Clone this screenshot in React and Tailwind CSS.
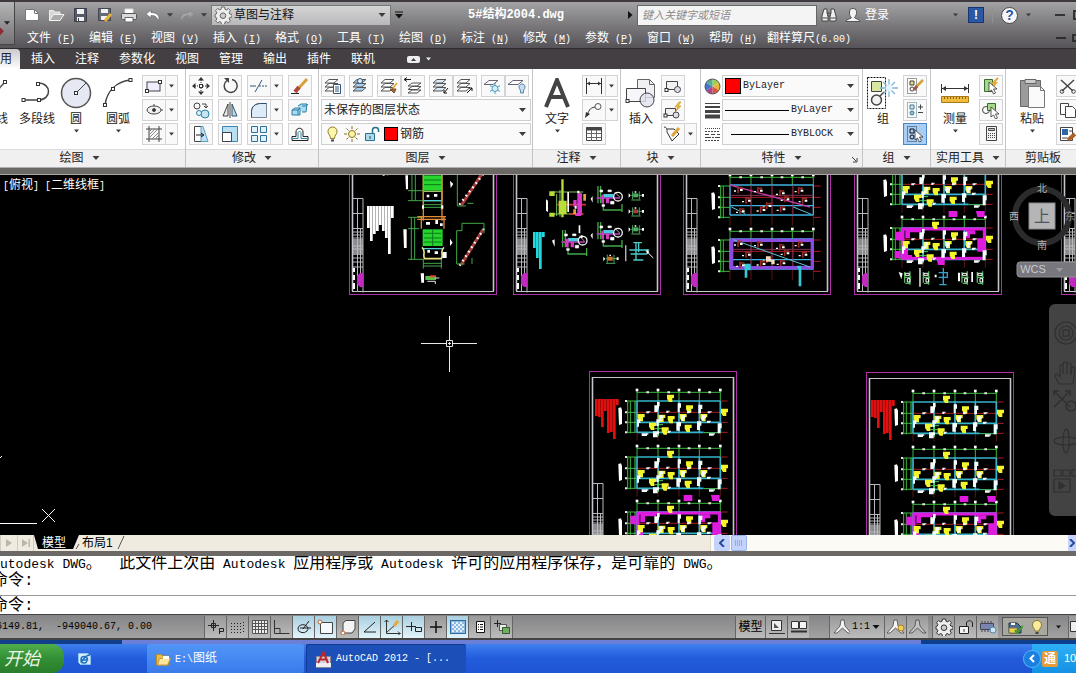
import React, { useState } from 'react';

// ---------- shared bits ----------
const MONO = "font-['Liberation_Mono','Noto_Sans_CJK_SC',monospace]";

const Icon = ({ w = 20, h = 18, children }) => (
  <svg
    width={w}
    height={h}
    viewBox={`0 0 ${w} ${h}`}
    fill="none"
    stroke="#444"
    className="shrink-0"
    aria-hidden="true"
  >
    {children}
  </svg>
);

const Caret = ({ color = '#3c3c3c', w = 7 }) => (
  <svg width={w} height="4" viewBox="0 0 7 4" className="shrink-0" aria-hidden="true">
    <path d="M0 0h7L3.500 4z" fill={color} />
  </svg>
);

// Latin part of a mixed label
const Latin = ({ children }) => <span className={`${MONO} text-[10px]`}>{children}</span>;

const ToolButton = ({ label, active, children }) => (
  <button
    type="button"
    aria-label={label}
    className={`flex h-[22px] w-6 shrink-0 items-center justify-center border ${
      active ? 'border-[#4d86c4] bg-[#a9cdf5]' : 'border-[#d3d3d6] bg-[#f9f9fa]'
    }`}
  >
    {children}
  </button>
);

const SplitButton = ({ label, children }) => (
  <div className="flex">
    <ToolButton label={label}>{children}</ToolButton>
    <button
      type="button"
      aria-label={`${label} ▾`}
      className="flex h-[22px] w-3 items-center justify-center border border-l-0 border-[#d3d3d6] bg-[#f9f9fa]"
    >
      <Caret w={5} />
    </button>
  </div>
);

const BigButton = ({ label, caret, className = '', children }) => (
  <button type="button" className={`flex shrink-0 flex-col items-center ${className}`}>
    <span className="flex h-9 items-center justify-center">{children}</span>
    <span className="h-4 leading-4 whitespace-nowrap">{label}</span>
    {caret && (
      <span className="flex h-2 items-center">
        <Caret w={5} />
      </span>
    )}
  </button>
);

const Panel = ({ title, className = '', footClass = '', corner, noCaret, children }) => (
  <section className={`flex shrink-0 flex-col border-r border-[#c4c4c6] ${className}`}>
    <div className="flex h-20 items-start pt-1.5">{children}</div>
    <div
      className={`relative flex h-[18px] items-center justify-center gap-2 border-t border-[#dcdcde] bg-[#f0f0f1] pb-0.5 ${footClass}`}
    >
      <span className="whitespace-nowrap">{title}</span>
      {!noCaret && <Caret w={8} />}
      {corner && (
        <button type="button" aria-label="特性选项板" className="absolute right-1 bottom-1">
          <Icon w={7} h={7}>
            <path d="M1 1l4 4M6 2v4H2" />
          </Icon>
        </button>
      )}
    </div>
  </section>
);

const Rows = ({ className = '', children }) => (
  <div className={`flex shrink-0 flex-col gap-0.5 ${className}`}>{children}</div>
);

const Combo = ({ label, value, lead, className = '', right }) => (
  <div className={`relative flex h-[22px] items-center border border-[#cfcfd2] bg-[#fafafa] ${className}`}>
    {lead}
    <select
      aria-label={label}
      className={`min-w-0 flex-1 appearance-none bg-transparent outline-none ${right ? 'text-right' : ''}`}
    >
      <option>{value}</option>
    </select>
    <span className="pointer-events-none flex w-4 justify-center">
      <Caret />
    </span>
  </div>
);

// ---------- title bar and menu ----------
const MENUS = [
  ['文件', 'F'], ['编辑', 'E'], ['视图', 'V'], ['插入', 'I'], ['格式', 'O'], ['工具', 'T'],
  ['绘图', 'D'], ['标注', 'N'], ['修改', 'M'], ['参数', 'P'], ['窗口', 'W'], ['帮助', 'H'],
];

const QuickAccess = () => (
  <div className="flex shrink-0 items-center">
    <button type="button" aria-label="新建" className="mr-2">
      <Icon w={16} h={14}>
        <path d="M1.500 1.500h9l4 4v7h-13z" fill="#fff" stroke="#777" />
        <path d="M10.500 1.500v4h4" stroke="#777" />
      </Icon>
    </button>
    <button type="button" aria-label="打开" className="mr-2">
      <Icon w={17} h={14}>
        <path d="M1.500 12.500v-10h4l1.500 1.500h5v3" fill="#d7d7d7" stroke="#eee" />
        <path d="M1.500 12.500l4-6h10.500l-4 6z" fill="#aaa" stroke="#f4f4f4" />
      </Icon>
    </button>
    <button type="button" aria-label="保存" className="mr-2">
      <Icon w={16} h={14}>
        <path d="M1.500.5h12v13h-12z" fill="#55596a" stroke="#3a3d48" />
        <path d="M4 1h7v5H4zM4 9h7v4H4z" fill="#f2f2f2" stroke="none" />
        <path d="M5.500 10v3" />
      </Icon>
    </button>
    <button type="button" aria-label="另存为" className="mr-2">
      <Icon w={16} h={14}>
        <path d="M1.500.5h12v12h-12z" fill="#666a78" stroke="#44464f" />
        <path d="M4 1h7v4H4zM4 8h7v4H4z" fill="#f2f2f2" stroke="none" />
        <path d="M8 13l6-7" stroke="#e3b23a" strokeWidth="3" />
      </Icon>
    </button>
    <button type="button" aria-label="打印" className="mr-2">
      <Icon w={16} h={15}>
        <path d="M4 6V1h8v5" fill="#fff" stroke="#ddd" />
        <rect x=".5" y="5.500" width="15" height="6" rx="1" fill="#d9d9d9" stroke="#555" />
        <path d="M4 9.500h8V14H4z" fill="#fff" stroke="#666" />
      </Icon>
    </button>
    <button type="button" aria-label="放弃" className="mr-1.5">
      <Icon w={16} h={13}>
        <path d="M6 1L1 5l5 4V6.500c4 0 6 1 7 5.500 3-5-1-8.500-7-8.500z" fill="#fff" stroke="#666" strokeWidth=".7" />
      </Icon>
    </button>
    <Caret w={6} />
    <button type="button" aria-label="重做" className="mx-1.5">
      <Icon w={16} h={13}>
        <path d="M10 1l5 4-5 4V6.500c-4 0-6 1-7 5.500-3-5 1-8.500 7-8.500z" fill="#a5a5a5" stroke="#888" strokeWidth=".7" />
      </Icon>
    </button>
    <Caret w={6} />
  </div>
);

const GearShape = ({ stroke = '#666' }) => (
  <Icon w={18} h={18}>
    <path
      d="M7.500 1h3l.5 2.300 1.400.6 2-1.300 2 2-1.300 2 .6 1.400 2.300.5v2.500l-2.300.5-.6 1.400 1.300 2-2 2-2-1.300-1.400.6-.5 2.300h-3L7 16.200l-1.400-.6-2 1.300-2-2 1.300-2-.6-1.400L1 11V8.500L2.300 8l.6-1.400-1.300-2 2-2 2 1.300L7 3.300z"
      fill="#eee"
      stroke={stroke}
      strokeLinejoin="round"
    />
    <circle cx="9" cy="9.700" r="2.800" stroke={stroke} fill="#ccc" />
  </Icon>
);

const TitleBar = () => (
  <header className="flex overflow-hidden border-t-2 border-[#3e3a40] bg-linear-to-b from-[#a3a2a4] to-[#555357] text-white">
    <button
      type="button"
      aria-label="应用程序菜单"
      className="relative h-[43px] w-[15px] shrink-0 border-r border-b border-[#444] bg-linear-to-b from-[#b5b5b6] to-[#757376]"
    >
      <span className="flex justify-center">
        <Caret w={6} color="#222" />
      </span>
      <span className="absolute bottom-2 -left-1 h-2 w-1.5 rotate-45 bg-[#8e2a34]" />
    </button>
    <div className="min-w-0 flex-1">
      <div className="flex h-[26px] items-center">
        <div className="pl-[9px]">
          <QuickAccess />
        </div>
        <div className="ml-1 flex h-[21px] w-[180px] shrink-0 items-center border border-[#777] bg-linear-to-b from-[#d5d5d6] to-[#b9b9bb] pl-0.5 text-[#111]">
          <GearShape />
          <select aria-label="工作空间" className="ml-0.5 min-w-0 flex-1 appearance-none bg-transparent outline-none">
            <option>草图与注释</option>
          </select>
          <span className="mr-1">
            <Caret w={8} />
          </span>
        </div>
        <button type="button" aria-label="自定义快速访问工具栏" className="ml-1">
          <Icon w={9} h={8}>
            <path d="M0 1h8" stroke="#111" />
            <path d="M0 3h8L4 7.500z" fill="#111" stroke="none" />
          </Icon>
        </button>
        <h1 className={`${MONO} min-w-0 flex-1 truncate text-center text-xs font-bold`}>5#结构2004.dwg</h1>
        <Icon w={5} h={8}>
          <path d="M0 0l4.500 4L0 8z" fill="#111" stroke="none" />
        </Icon>
        <input
          type="text"
          aria-label="搜索"
          placeholder="键入关键字或短语"
          className="ml-1 h-[21px] w-[180px] shrink-0 border border-[#666] bg-[#f4f4f4] px-1 text-[11px] italic outline-none placeholder:text-[#8b8b8b]"
        />
        <button type="button" aria-label="查找" className="ml-1">
          <Icon w={16} h={16}>
            <path d="M3 2h3v4l1 3v5H1V9zM10 2h3l2 7v5H9V9l1-3z" fill="#efefef" stroke="#444" />
            <path d="M7 6h2v3H7z" fill="#ccc" />
            <path d="M1.500 11h5M9.500 11h5" />
          </Icon>
        </button>
        <button type="button" className="ml-2 flex items-center gap-1">
          <Icon w={16} h={16}>
            <path d="M8 1.500c3 0 4 2 3.500 5C11 9 10 10 9.500 10.500c0 1.500 5 1 5.500 4H1c.5-3 5.500-2.500 5.500-4C5 10 4.500 8 4.500 6 4.500 3 5 1.500 8 1.500z" fill="#f4f4f4" stroke="#555" />
          </Icon>
          登录
        </button>
        <div className="ml-auto flex w-[187px] shrink-0 items-center pl-16">
          <Caret w={5} />
          <button type="button" aria-label="通讯中心" className="ml-2.5 flex h-4 w-4 shrink-0 items-center justify-center border border-[#17356e] bg-[#2c58a3] text-xs font-bold text-white">
            !
          </button>
          <span className="mx-2 h-4 border-l border-[#909090]" />
          <button type="button" aria-label="帮助" className="flex h-[17px] w-[17px] shrink-0 items-center justify-center rounded-full border border-[#444] bg-[#f6f6fa] text-sm font-bold text-[#2c58a3]">
            ?
          </button>
          <span className="ml-2">
            <Caret w={5} />
          </span>
          <button type="button" aria-label="最小化" className="ml-6 h-0.5 w-2.5 shrink-0 bg-[#333]" />
          <button type="button" aria-label="还原" className="ml-2 h-2.5 w-2.5 shrink-0 border-2 border-[#333]" />
        </div>
      </div>
      <nav className="flex h-5 items-center pl-3">
        {MENUS.map(([name, key]) => (
          <button key={key} type="button" className="w-[62px] shrink-0 text-left whitespace-nowrap">
            {name}
            <Latin>
              {' '}(<u>{key}</u>)
            </Latin>
          </button>
        ))}
        <button type="button" className="-ml-1 shrink-0 whitespace-nowrap">
          翻样算尺<Latin>(6.00)</Latin>
        </button>
        <div className="ml-auto flex items-center">
          <button type="button" aria-label="最小化图形" className="h-0.5 w-2.5 bg-[#2f2d30]" />
          <button type="button" aria-label="还原图形" className="ml-1.5 h-2 w-1 border-2 border-r-0 border-[#2f2d30]" />
        </div>
      </nav>
    </div>
  </header>
);

// ---------- ribbon tabs ----------
const TABS = ['插入', '注释', '参数化', '视图', '管理', '输出', '插件', '联机'];

const RibbonTabs = () => (
  <nav className="flex h-[21px] items-center gap-5 overflow-hidden border-t border-[#2f2c2f] bg-[#433f42] text-white">
    <button type="button" className="-mr-[9px] flex h-full w-5 shrink-0 items-center justify-start rounded-tr-sm bg-linear-to-b from-[#c9c9cb] to-white text-[#222]">
      用
    </button>
    {TABS.map((t) => (
      <button key={t} type="button" className="shrink-0">
        {t}
      </button>
    ))}
    <div className="ml-3 flex items-center gap-1.5">
      <button type="button" aria-label="最小化功能区">
        <Icon w={13} h={7}>
          <rect width="13" height="7" rx="2" fill="#eee" stroke="none" />
          <path d="M4 5l2.500-3L9 5z" fill="#433f42" stroke="none" />
        </Icon>
      </button>
      <Caret w={5} color="#eee" />
    </div>
  </nav>
);

// ---------- ribbon icons ----------
const Node = ({ x, y }) => <rect x={x - 1.500} y={y - 1.500} width="3" height="3" fill="#fff" stroke="#333" />;

const LayerStack = ({ children, fill = '#fff' }) => (
  <Icon>
    <path d="M6 2.500h9l-4 3.500H2zM6 6.500h9l-4 3.500H2zM6 10.500h9l-4 3.500H2z" fill={fill} stroke="#555" />
    {children}
  </Icon>
);

const DrawPanel = () => (
  <Panel title="绘图" className="w-[186px] overflow-hidden" footClass="pr-[26px]">
    <BigButton label="直线" className="-ml-4 w-6">
      <svg width="24" height="34" viewBox="0 0 24 34" fill="none" stroke="#555" aria-hidden="true">
        <path d="M4 24L21 6" strokeWidth="1.500" />
        <Node x={21} y={6} />
      </svg>
    </BigButton>
    <BigButton label="多段线" className="ml-2.5 w-[38px]">
      <Icon w={32} h={28}>
        <path d="M2 21h15c14 0 14-17 0-17" strokeWidth="1.500" />
        <Node x={2.500} y={21} />
        <Node x={18} y={21} />
        <Node x={17} y={5} />
      </Icon>
    </BigButton>
    <BigButton label="圆" caret className="ml-1 w-8">
      <Icon w={32} h={32}>
        <circle cx="16" cy="16" r="14.500" fill="#e6e9f3" stroke="#555" strokeWidth="1.500" />
        <path d="M16 16L26 6" />
        <Node x={16} y={16} />
      </Icon>
    </BigButton>
    <BigButton label="圆弧" caret className="ml-2.5 w-8">
      <Icon w={32} h={32}>
        <path d="M3 28C5 14 14 5 28 3" strokeWidth="1.500" />
        <Node x={3} y={28} />
        <Node x={11} y={12} />
        <Node x={28.500} y={3} />
      </Icon>
    </BigButton>
    <Rows className="ml-2">
      <SplitButton label="矩形">
        <Icon w={18} h={16}>
          <rect x="2" y="4" width="13" height="9" fill="#eef" stroke="#444" />
          <Node x={2} y={13} />
          <Node x={15} y={4} />
        </Icon>
      </SplitButton>
      <SplitButton label="椭圆">
        <Icon w={18} h={16}>
          <ellipse cx="9" cy="8" rx="7" ry="4" fill="#f1f1f4" />
          <circle cx="9" cy="8" r="1.500" fill="#333" />
          <path d="M9 2v2M16 8h2" />
        </Icon>
      </SplitButton>
      <SplitButton label="图案填充">
        <Icon w={18} h={16}>
          <path d="M4 0v16M14 0v16M1 3h16M1 13h16" />
          <path d="M4 6l3-3M4 9l6-6M4 12l9-9M7 13l7-7M10 13l4-4" stroke="#888" />
        </Icon>
      </SplitButton>
    </Rows>
  </Panel>
);

const ModifyPanel = () => (
  <Panel title="修改" className="w-[133px]">
    <div className="flex gap-[5px] pl-[3px]">
      <Rows>
        <ToolButton label="移动">
          <Icon w={18} h={18}>
            <path d="M9 3v4M9 11v4M3 9h4M11 9h4" stroke="#333" strokeDasharray="1 1" />
            <path d="M9 0l3 3.500H6zM9 18l3-3.500H6zM0 9l3.500-3v6zM18 9l-3.500-3v6z" fill="#333" stroke="none" />
            <Node x={9} y={9} />
          </Icon>
        </ToolButton>
        <ToolButton label="复制">
          <Icon>
            <circle cx="6" cy="5" r="3" />
            <circle cx="14" cy="13" r="4" fill="#c7e4f2" stroke="#2e7fa5" />
            <circle cx="8" cy="12" r="2.500" fill="#e6f3f9" stroke="#2e7fa5" />
            <path d="M11 3h4v4M13 5l2 2 2-2" />
          </Icon>
        </ToolButton>
        <ToolButton label="拉伸">
          <Icon>
            <path d="M3.500 1.500h7v15h-7z" fill="#fff" />
            <path d="M10 1.500h2l5 15h-7z" fill="#bfe0f2" stroke="#5a9fc0" />
            <path d="M5 10h7M10 8l3 2-3 2" stroke="#222" />
          </Icon>
        </ToolButton>
      </Rows>
      <Rows>
        <ToolButton label="旋转">
          <Icon w={18} h={18}>
            <path d="M6 3.500a6.500 6.500 0 1 0 5-1" strokeWidth="1.500" />
            <path d="M3 1h5v5z" fill="#444" stroke="none" />
          </Icon>
        </ToolButton>
        <ToolButton label="镜像">
          <Icon w={18} h={18}>
            <path d="M7 3v12H2z" fill="#e8e8e8" />
            <path d="M11 3v12h5z" fill="#b9ddf0" stroke="#356" />
            <path d="M9 1v16" />
          </Icon>
        </ToolButton>
        <ToolButton label="缩放">
          <Icon w={18} h={18}>
            <path d="M1.500 1.500h15v15h-15z" fill="#b9dff2" stroke="#3b86ad" />
            <path d="M1.500 7.500h9v9h-9z" fill="#fff" />
          </Icon>
        </ToolButton>
      </Rows>
      <Rows>
        <SplitButton label="修剪">
          <Icon>
            <path d="M1 9h6M13 3L6 15" stroke="#357" />
            <path d="M10 9h8" stroke="#357" strokeDasharray="2 1" />
          </Icon>
        </SplitButton>
        <SplitButton label="圆角">
          <Icon>
            <path d="M2.500 16.500v-6c0-5 4-8 9-8h6v14z" fill="#dcebf5" stroke="#789" />
            <path d="M2.500 16.500v-6c0-5 4-8 9-8h6" stroke="#2f4f6f" />
          </Icon>
        </SplitButton>
        <SplitButton label="阵列">
          <Icon>
            <path d="M2.500 1.500h6v6h-6zM11.500 1.500h6v6h-6zM2.500 10.500h6v6h-6zM11.500 10.500h6v6h-6z" fill="#dff0fa" stroke="#2e7096" />
          </Icon>
        </SplitButton>
      </Rows>
      <Rows>
        <ToolButton label="删除">
          <Icon w={20} h={18}>
            <path d="M17 2L8 12" stroke="#d6a13a" strokeWidth="3" />
            <path d="M9 10l-4 5" stroke="#b3423a" strokeWidth="4" />
            <path d="M1 16.500h8" stroke="#222" />
          </Icon>
        </ToolButton>
        <ToolButton label="分解">
          <Icon w={20} h={18}>
            <path d="M2 9l3-2h5v7H2zM8 5l3-2h6l-1 8h-4" fill="#a9dcf0" stroke="#2a7fa6" />
            <path d="M2 9h6v5M8 9l2-2M12 5h4M16 5l2-2" stroke="#2a7fa6" />
          </Icon>
        </ToolButton>
        <ToolButton label="偏移">
          <Icon w={20} h={18}>
            <path d="M2 15.500h16v-4h-5V7c0-5-7-5-7 0v4.500H2z" stroke="#222" />
            <path d="M2 13.500h6V8c0-2 3-2 3 0v5.500h7" stroke="#3484a8" />
          </Icon>
        </ToolButton>
      </Rows>
    </div>
  </Panel>
);

const LayerPanel = () => (
  <Panel title="图层" className="w-[214px]">
    <Rows className="w-[212px] pl-[2px]">
      <div className="flex gap-1">
        <ToolButton label="图层特性">
          <LayerStack>
            <path d="M10.500 7.500h7v9h-7z" fill="#fff" stroke="#357" />
            <path d="M12 10h4M12 12h4M12 14h4" stroke="#357" />
          </LayerStack>
        </ToolButton>
        <ToolButton label="置为当前">
          <LayerStack fill="#a8d0f0">
            <circle cx="9" cy="4" r="2.500" fill="#e4eef7" stroke="#357" />
          </LayerStack>
        </ToolButton>
        <div className="flex">
          <ToolButton label="匹配">
            <LayerStack>
              <path d="M11 12l4 4 2-4z" fill="#a86a32" stroke="#7a4a20" />
              <path d="M14 11l4-5" stroke="#e5b13e" strokeWidth="2" />
            </LayerStack>
          </ToolButton>
          <ToolButton label="上一个">
            <Icon>
              <path d="M9 6h9l-4 3H5zM9 9.500h9l-4 3H5zM9 13h9l-4 3H5z" fill="#fff" stroke="#555" />
              <path d="M1 2.500h7M4 .5l-3 2 3 2" stroke="#222" />
            </Icon>
          </ToolButton>
        </div>
        <div className="flex">
          <ToolButton label="隔离">
            <LayerStack fill="#dcebf6">
              <path d="M17 11l-4 5M13 13v3h3" stroke="#111" />
            </LayerStack>
          </ToolButton>
          <ToolButton label="取消隔离">
            <LayerStack>
              <path d="M12 16l5-5M14 11h3v3" stroke="#111" />
            </LayerStack>
          </ToolButton>
        </div>
        <div className="flex">
          <ToolButton label="冻结">
            <Icon>
              <path d="M6 3.500h9l-5 4H1z" fill="#fff" stroke="#667" />
              <path d="M12 6v11M7 8.500l10 6M17 8.500l-10 6" stroke="#4b9cc0" />
              <circle cx="12" cy="11.500" r="3" fill="#d8eff8" stroke="#4b9cc0" />
            </Icon>
          </ToolButton>
          <ToolButton label="关闭">
            <Icon>
              <path d="M6 3.500h10l-5 4H1z" fill="#fff" stroke="#667" />
              <path d="M12 10c0-4 6-4 6 0 0 2-1.500 2.500-1.500 4v2h-3v-2c0-1.500-1.500-2-1.500-4z" fill="#c8dcf0" stroke="#58a" />
            </Icon>
          </ToolButton>
        </div>
      </div>
      <Combo label="图层状态" value="未保存的图层状态" lead={<span className="w-0.5" />} />
      <Combo
        label="图层"
        value="钢筋"
        lead={
          <span className="mr-0.5 flex items-center gap-1 pl-1">
            <Icon w={14} h={18}>
              <path d="M2 6.500c0-6 9-6 9 0 0 3-2.500 3.500-2.500 7h-4C4.500 10 2 9.500 2 6.500z" fill="#fdf6a8" stroke="#8a7a30" />
              <path d="M5 15.500h3" stroke="#444" strokeWidth="2" />
            </Icon>
            <Icon w={16} h={16}>
              <path d="M8 0v16M0 8h16M2.500 2.500l11 11M13.500 2.500l-11 11" stroke="#8a7420" />
              <circle cx="8" cy="8" r="5" fill="#fafafa" stroke="none" />
              <circle cx="8" cy="8" r="3.500" fill="#fdf3a0" stroke="#8a7420" />
            </Icon>
            <Icon w={16} h={16}>
              <path d="M1.500 7.500h9v7h-9z" fill="#aadcee" stroke="#2a6f90" />
              <path d="M8.500 7V4c0-3.500 6-3.500 6 0v2" stroke="#2a6f90" strokeWidth="1.500" />
              <path d="M6 10v3" />
            </Icon>
            <span className="h-3.5 w-3.5 border border-black bg-[#f00]" />
          </span>
        }
      />
    </Rows>
  </Panel>
);

const AnnotatePanel = () => (
  <Panel title="注释" className="w-[88px]">
    <BigButton label="文字" caret className="ml-2 w-8">
      <Icon w={28} h={30}>
        <path d="M3 29L14 2l11 27M7 19h14" stroke="#444" strokeWidth="4" />
      </Icon>
    </BigButton>
    <Rows className="ml-[9px]">
      <SplitButton label="线性">
        <Icon>
          <path d="M2.500 1v16M17.500 1v16M3 6.500h14" stroke="#333" />
          <path d="M3 6.500l3-2v4zM17 6.500l-3-2v4z" fill="#333" stroke="none" />
        </Icon>
      </SplitButton>
      <SplitButton label="引线">
        <Icon>
          <path d="M3 15c2-5 2-8 8-9" stroke="#333" />
          <circle cx="14" cy="5.500" r="3" stroke="#555" />
          <path d="M1 17l1-6 4 2z" fill="#333" stroke="none" />
        </Icon>
      </SplitButton>
      <ToolButton label="表格">
        <Icon w={18} h={16}>
          <path d="M1.500 1.500h15v13h-15z" fill="#fff" />
          <path d="M1.500 3h15" strokeWidth="3" />
          <path d="M1.500 7.500h15M1.500 11.500h15M6.500 4v11M11.500 4v11" stroke="#666" />
        </Icon>
      </ToolButton>
    </Rows>
  </Panel>
);

const BlockPanel = () => (
  <Panel title="块" className="w-20">
    <BigButton label="插入" className="ml-1 w-8">
      <Icon w={32} h={32}>
        <path d="M12.500 2.500h12l5 5v13h-17z" fill="#efeff4" stroke="#666" />
        <path d="M24.500 2.500v5h5" stroke="#666" />
        <path d="M1.500 11.500h19v13h-19z" fill="#f6f6fa" />
        <circle cx="22" cy="23" r="7" fill="#dfe2ee" fillOpacity=".8" />
        <Node x={2.500} y={24} />
      </Icon>
    </BigButton>
    <Rows className="ml-1">
      <ToolButton label="创建">
        <Icon>
          <path d="M3.500 4.500h11v8h-11z" fill="#f0f0f5" />
          <circle cx="14.500" cy="12.500" r="3" fill="#dde" />
          <Node x={3.500} y={13} />
        </Icon>
      </ToolButton>
      <ToolButton label="编辑">
        <Icon>
          <path d="M2.500 7.500h10v7h-10z" fill="#f0f0f5" />
          <circle cx="13" cy="14" r="3" fill="#dde" />
          <path d="M16 1l-4 5h3l-3 5 6-6h-3l3-4z" fill="#f6c73a" stroke="#b88a20" strokeWidth=".6" />
          <Node x={2.500} y={14.500} />
        </Icon>
      </ToolButton>
      <SplitButton label="编辑属性">
        <Icon>
          <path d="M1 2c3 0 3 3 3 5l5 9 7-7-5-5H4" stroke="#333" />
          <path d="M9 11l7-8" stroke="#e0a53a" strokeWidth="3" />
        </Icon>
      </SplitButton>
    </Rows>
  </Panel>
);

const PropertiesPanel = () => (
  <Panel title="特性" className="w-[162px]" corner>
    <Rows className="w-5 items-center pl-0.5">
      <span className="flex h-[22px] items-center">
        <Icon w={17} h={17}>
          <path d="M8.500 8.500V1A7.500 7.500 0 0 1 15 4.700z" fill="#a4cf4a" stroke="none" />
          <path d="M8.500 8.500L15 4.700a7.500 7.500 0 0 1 0 7.600z" fill="#e8b83a" stroke="none" />
          <path d="M8.500 8.500l6.500 3.800A7.500 7.500 0 0 1 8.500 16z" fill="#dc5a38" stroke="none" />
          <path d="M8.500 8.500V16A7.500 7.500 0 0 1 2 12.300z" fill="#b0468e" stroke="none" />
          <path d="M8.500 8.500L2 12.300a7.500 7.500 0 0 1 0-7.600z" fill="#4774c6" stroke="none" />
          <path d="M8.500 8.500L2 4.700A7.500 7.500 0 0 1 8.500 1z" fill="#55ad92" stroke="none" />
          <circle cx="8.500" cy="8.500" r="7.500" stroke="#556" />
        </Icon>
      </span>
      <span className="flex h-[22px] items-center">
        <Icon w={17} h={17}>
          <path d="M1 1.500h15" />
          <path d="M1 5h15" strokeWidth="2" />
          <path d="M1 9.500h15" strokeWidth="3" />
          <path d="M1 14.500h15" strokeWidth="4" />
        </Icon>
      </span>
      <span className="flex h-[22px] items-center">
        <Icon w={17} h={14}>
          <path d="M1 1.500h15" strokeDasharray="1 1" />
          <path d="M1 4.500h15" strokeDasharray="2 1" />
          <path d="M1 7.500h15" strokeDasharray="4 2" />
          <path d="M1 10.500h15" strokeDasharray="6 1 2 1" />
          <path d="M1 13.500h15" strokeDasharray="2 1" />
        </Icon>
      </span>
    </Rows>
    <Rows className={`ml-px w-[137px] ${MONO} text-[10px]`}>
      <Combo
        label="颜色"
        value="ByLayer"
        lead={<span className="mr-0.5 ml-0.5 h-4 w-4 border border-black bg-[#f00]" />}
      />
      <Combo
        label="线宽"
        value="ByLayer"
        lead={<span className="mr-0.5 ml-0.5 w-16 border-t border-black" />}
      />
      <Combo
        label="线型"
        value="BYBLOCK"
        lead={<span className="mr-0.5 ml-2 w-[58px] border-t border-black" />}
      />
    </Rows>
  </Panel>
);

const Cursor = ({ x, y }) => (
  <path
    transform={`translate(${x} ${y})`}
    d="M0 0v10l2.500-2 2 4 2-1-2-4H8z"
    fill="#fff"
    stroke="#333"
    strokeWidth=".8"
  />
);

const GroupPanel = () => (
  <Panel title="组" className="w-[68px]">
    <BigButton label="组" className="ml-1 w-8">
      <Icon w={32} h={32}>
        <path d="M.5.500h18v31H.5z" stroke="#111" strokeDasharray="2 1" />
        <path d="M4.500 4.500h10v10h-10z" fill="#d8e8a0" />
        <circle cx="9.500" cy="23" r="5" fill="#f2f2f2" strokeWidth="1.500" />
        <path d="M13 19l4-4" strokeWidth="1.500" />
        <path d="M22 2v18M13 11h18M16 5l12 12M28 5L16 17" stroke="#79b7dc" strokeWidth="1.300" />
        <circle cx="22" cy="11" r="3.500" fill="#e6f5fc" stroke="none" />
      </Icon>
    </BigButton>
    <Rows className="ml-1">
      <ToolButton label="解除编组">
        <Icon>
          <path d="M2.500 1.500h9v15h-9z" strokeDasharray="1 1" />
          <path d="M5 4h4v4H5z" fill="#dd8" />
          <circle cx="7" cy="12" r="2" />
          <path d="M18 3l-7 7" stroke="#d6a13a" strokeWidth="2.500" />
          <path d="M12 9l-3 4" stroke="#a0564a" strokeWidth="3" />
        </Icon>
      </ToolButton>
      <ToolButton label="组编辑">
        <Icon>
          <path d="M2.500 1.500h9v15h-9z" stroke="#478" strokeDasharray="1 1" />
          <path d="M5 4h4v4H5z" fill="#cfe6f4" stroke="#478" />
          <circle cx="7" cy="12" r="2" fill="#8cc2e0" stroke="#478" />
          <path d="M13 6h5M15.500 3.500v5M13 11.500h5" />
        </Icon>
      </ToolButton>
      <ToolButton label="启用组选择" active>
        <Icon>
          <path d="M2.500 1.500h9v15h-9z" stroke="#234" strokeDasharray="1 1" />
          <path d="M5 4h4v4H5z" stroke="#111" />
          <circle cx="7" cy="12" r="2" stroke="#111" />
          <Cursor x={10} y={5} />
        </Icon>
      </ToolButton>
    </Rows>
  </Panel>
);

const UtilitiesPanel = () => (
  <Panel title="实用工具" className="w-[75px]">
    <BigButton label="测量" caret className="ml-2 w-8">
      <Icon w={30} h={28}>
        <path d="M1.500 5v9M28.500 5v9M2 9.500h26" stroke="#333" />
        <path d="M2 9.500l4-2.500v5zM28 9.500L24 7v5z" fill="#333" stroke="none" />
        <path d="M1.500 17.500h27v6h-27z" fill="#f0bd3c" stroke="#a67a1c" />
        <path d="M4.500 18v2M7.500 18v2M10.500 18v2M13.500 18v2M16.500 18v2M19.500 18v2M22.500 18v2M25.500 18v2" stroke="#8a6414" />
      </Icon>
    </BigButton>
    <Rows className="ml-2">
      <ToolButton label="快速选择">
        <Icon>
          <path d="M3.500 2.500h8v12h-8z" fill="#a5d88a" stroke="#3a6a30" />
          <path d="M17 1l-5 5h3l-3 4" stroke="#e3a93a" strokeWidth="2" />
          <Cursor x={8} y={5} />
        </Icon>
      </ToolButton>
      <ToolButton label="全部选择">
        <Icon>
          <circle cx="5" cy="9" r="3.500" />
          <path d="M6.500 2.500h8v7h-8z" fill="#a5d88a" stroke="#3a6a30" />
          <Cursor x={10} y={6} />
        </Icon>
      </ToolButton>
      <ToolButton label="快速计算器">
        <Icon w={16} h={18}>
          <path d="M3.500 1.500h10v14h-10z" fill="#f4f4f4" />
          <path d="M5.500 3.500h6v2h-6z" fill="#ccc" />
          <path d="M5 8.500h7M5 10.500h7M5 12.500h7" strokeDasharray="1 1" />
        </Icon>
      </ToolButton>
    </Rows>
  </Panel>
);

const ClipboardPanel = () => (
  <Panel title="剪贴板" className="flex-1 overflow-hidden border-r-0" noCaret footClass="pl-1">
    <BigButton label="粘贴" caret className="ml-2.5 w-8">
      <Icon w={28} h={32}>
        <path d="M2.500 3.500h20v26h-20z" fill="#9b9b9b" stroke="#666" />
        <path d="M7 2.500h11v4H7z" fill="#ccc" stroke="#666" />
        <path d="M10.500 9.500h12l4 4v17h-16z" fill="#fafafa" stroke="#777" />
        <path d="M22.500 9.500v4h4" stroke="#777" />
      </Icon>
    </BigButton>
    <Rows className="ml-2">
      <ToolButton label="剪切">
        <Icon>
          <path d="M3 3l12 11M16 3L4 14" strokeWidth="1.500" />
          <circle cx="4" cy="14.500" r="1.800" />
          <circle cx="15.500" cy="14.500" r="1.800" />
        </Icon>
      </ToolButton>
      <ToolButton label="复制到剪贴板">
        <Icon>
          <path d="M2.500 2.500h8v11h-8z" fill="#fff" />
          <path d="M7.500 5.500h7l3 3v8h-10z" fill="#fff" />
        </Icon>
      </ToolButton>
      <ToolButton label="特性匹配">
        <Icon>
          <path d="M2.500 2.500h12v13h-12z" fill="#fff" />
          <path d="M4 4h6v6H4z" fill="#2f65a8" stroke="none" />
          <path d="M11 6h3M4 13h5" />
          <path d="M10 15l7-6" stroke="#a8622a" strokeWidth="4" />
        </Icon>
      </ToolButton>
    </Rows>
  </Panel>
);

const Ribbon = () => (
  <div className="flex overflow-hidden border-b border-[#b0b0b2] bg-white text-[#222]">
    <DrawPanel />
    <ModifyPanel />
    <LayerPanel />
    <AnnotatePanel />
    <BlockPanel />
    <PropertiesPanel />
    <GroupPanel />
    <UtilitiesPanel />
    <ClipboardPanel />
  </div>
);

// ---------- drawing area ----------
const YELLOW = '#f4f42c';
const MAGENTA = '#e01be0';
const GREEN = '#3cb83c';
const CYAN = '#35b4cc';

// title block and double frame of one sheet
const Sheet = ({ x, y, h = 208 }) => (
  <g transform={`translate(${x} ${y})`} fill="none">
    <rect x=".5" y=".5" width="147" height={h} stroke="#b030a8" />
    <path d={`M3 6.500h142M3 ${h - 2.500}h142`} stroke="#c8c8cc" />
    <path d={`M3.500 6v${h - 9}M144.500 6v${h - 9}`} stroke="#c4c4cc" strokeWidth="1.600" />
    <path d="M3.500 112.500h10.500v94M8.500 112v94M11.500 142v50" stroke="#b9b9bc" />
    <path d="M4 127.500h10M4 142.500h10M4 146h10M4 149h10M4 152h10M4 160h10M4 163h10M4 172h10M4 176h10M4 181h10" stroke="#b9b9bc" />
    <path d="M4 153h10v16H4z" fill="#b9b9bc" fillOpacity=".75" />
    <path d="M4 182h2v4H4zM4 189h2v5H4zM4 197h2v6H4z" fill="#fff" />
    <path d="M8 190l3-3h3v14h-3l-3-3z" fill="#c02ac0" />
  </g>
);

const COLS = [0, 63, 126, 187, 250];
const TAGS = [[90, 14], [147, 46], [252, 56], [64, 74], [128, 72], [190, 72], [92, 78], [2, 72], [143, 104], [74, 112], [36, 98]];
const SPOTS = [
  [52, 46, 14, 20], [60, 36, 8, 26], [122, 40, 10, 26], [184, 44, 12, 26], [0, 88, 10, 22], [58, 88, 11, 20],
  [118, 96, 14, 26], [180, 94, 13, 26], [242, 100, 12, 30], [48, 124, 18, 18], [14, 130, 20, 8], [28, 64, 12, 6],
  [88, 62, 10, 7], [150, 64, 12, 6], [212, 64, 12, 6], [210, 92, 12, 7], [92, 122, 10, 7], [216, 130, 18, 7],
  [132, 76, 12, 16], [194, 76, 12, 16], [68, 76, 10, 18],
];

const Grid = ({ red = true }) => (
  <>
    <path d="M0 7H250M-28 33V130M-20 33V130M-34 33H0M-34 67H0M-34 97H0M-34 127H0" stroke={GREEN} strokeWidth="3" />
    {COLS.map((c) => (
      <g key={c}>
        <path d={`M${c} 0V33`} stroke={GREEN} strokeWidth="3" />
        <path d={`M${c} 34V152`} stroke={red ? '#8f2020' : '#2b7f93'} strokeWidth="2" />
        <path d={`M${c - 4} -4h8v8h-8z`} fill="#fff" />
      </g>
    ))}
    <path d="M28 4h8v6h-8zM91 4h8v6h-8zM152 4h8v6h-8zM214 4h8v6h-8zM-36 30h6v6h-6zM-36 64h6v6h-6zM-36 94h6v6h-6zM-36 124h6v6h-6z" fill="#e8e8e8" />
    <path d="M0 67H272M250 33h22M250 97h22M250 127h22" stroke="#b01c24" strokeWidth="3" />
    <path d="M-56 54l8-2 3 8v42l-9 3z" fill="#fff" />
  </>
);

// reinforcement floor plan, drawn in thirds of a pixel
const Plan = ({ x, y, boxed }) => (
  <g transform={`translate(${x} ${y}) scale(.3333)`} fill="none">
    <Grid />
    <path d="M0 33H250M0 97H250M0 127H200M0 33V127M63 33V127M126 33V127M187 33V127M250 33V127" stroke={CYAN} strokeWidth="5" />
    <path d="M48 104h30M52 116h24M64 98v40M200 128h52M-6 33v94" stroke="#48d060" strokeWidth="3" />
    {boxed && (
      <>
        <rect x="3" y="36" width="244" height="88" stroke={MAGENTA} strokeWidth="9" />
        <path d="M-20 44h18v26h-18zM10 36h48v10H24v18H10zM140 -18h26v18h-26zM222 -18h26v18h-22zM226 64h22v40h-22zM190 40h30v12h-16v12h-14zM-22 102h18v22h-18zM104 128h24v16h-20zM6 78h12v36h12v10H6z" fill={MAGENTA} />
      </>
    )}
    {TAGS.map(([tx, ty]) => (
      <path key={`${tx}-${ty}`} d={`M${tx} ${ty}h21v10h-5v12h-10l-6-10z`} fill={YELLOW} />
    ))}
    {SPOTS.map(([sx, sy, w, h]) => (
      <path key={`${sx}-${sy}`} d={`M${sx} ${sy}h${w}v${h / 2}h-4v${h / 2}h-${w - 4}z`} fill="#f4fcfc" />
    ))}
  </g>
);

const BeamPlan = ({ x, y, boxed }) => (
  <g transform={`translate(${x} ${y}) scale(.3333)`} fill="none">
    <Grid />
    <path d="M0 30H250M0 92H250M0 120H250M0 30V120M250 30V120" stroke="#3fb2e4" strokeWidth="4" />
    <path d="M0 61H250M63 30V120M126 30V120M189 30V120" stroke="#7f3558" strokeWidth="3" />
    {boxed ? (
      <>
        <rect x="5" y="34" width="242" height="82" stroke="#8c4be0" strokeWidth="10" />
        <path d="M10 32L240 114" stroke="#5cc6d8" strokeWidth="3" />
        <path d="M42 104h20v20H52v22h-8v-22zM200 110h14v62h-8v-50z" fill="#35c8d4" />
      </>
    ) : (
      <>
        <path d="M0 30L240 96" stroke="#c03aa0" strokeWidth="4" />
        <path d="M4 96l42 20M190 96l54 22" stroke="#5cc6d8" strokeWidth="3" />
      </>
    )}
    {[[24, 34], [84, 36], [150, 44], [206, 36], [48, 66], [110, 82], [164, 62], [218, 66], [30, 98], [92, 94], [152, 92]].map(([a, b]) => (
      <g key={`${a}-${b}`}>
        <path d={`M${a} ${b}v20M${a + 3} ${b + 4}h10`} stroke="#9a2a24" strokeWidth="5" />
        <path d={`M${a + 6} ${b + 8}h8v6h-8zM${a - 12} ${b + 12}h6v4h-6z`} fill="#fff" />
      </g>
    ))}
    {boxed && <path d="M108 82h14v10h12v14h-10v-8h-16z" fill="#f2dcc0" />}
  </g>
);

// vertical text columns seen from far away
const TextStripes = ({ x, y, color, bars }) => (
  <g transform={`translate(${x} ${y})`} fill={color}>
    {bars.map((b, i) => (
      <rect key={i} x={i * 3} y="0" width="2.700" height={b} />
    ))}
  </g>
);

const StairSheet = () => (
  <g transform="translate(340 170) scale(.3333)" fill="none">
    <path d="M216 0v92M226 0v92M204 92h50M204 62h44M204 142h44M204 268h48M214 142v126M224 142v126M250 92v28M304 92v28M250 104h56M250 112h56M250 268v28M304 268v28M250 280h56M250 288h56M204 176h34" stroke="#41a848" strokeWidth="3" />
    <path d="M248 0h60v62h-60z" fill="#25d42c" />
    <path d="M248 178h60v50h-60z" fill="#25d42c" />
    <path d="M252 16h52M252 30h52M252 44h52M252 190h52M252 204h52M252 216h52M278 178v50" stroke="#0b7a18" strokeWidth="3" />
    <path d="M250 64h56v28h-56z" stroke="#9cc06a" strokeWidth="4" />
    <path d="M250 12v140M306 12v140M232 140h86M232 148h86M244 140v36M312 140v36" stroke="#e08a34" strokeWidth="4" />
    <path d="M252 92h52M246 236h64" stroke="#4fd0d8" strokeWidth="4" />
    <path d="M246 232c14 12 0 22 8 34h50c8-12-6-22 8-34" stroke="#e8e080" strokeWidth="5" />
    <path d="M260 74h8v8h-8zM282 72h10v8h-10zM258 156h12v8h-12zM286 150h8v12h-8zM262 240h8v8h-8zM284 244h10v8h-10zM300 160h8v8h-8zM246 106h6v10h-6zM304 106h6v10h-6zM308 246h12v18h-12z" fill="#fff" />
    <path d="M196 16h8v42h-6zM190 178h10v56h-8zM330 32l10 10-8 12zM330 206l8 12-8 10z" fill="#fff" />
    <path d="M424 14L364 106M428 180L364 284" stroke="#a83a38" strokeWidth="9" />
    <path d="M430 12L358 104M432 176L358 288" stroke="#fff" strokeWidth="7" strokeDasharray="5 11" />
    <path d="M352 10v98h26M400 100h-18M350 182v100h24M350 182h16v-22h66v30M396 264v18" stroke="#41a848" strokeWidth="3" />
    <path d="M242 310h10v28h-8z" fill="#fff" />
    <path d="M256 318h32v12h-32z" fill="#58c048" />
    <path d="M270 316h18v6h-18z" fill="#e05030" />
    <path d="M262 334h24v8M286 324h12" stroke="#e8e8e8" strokeWidth="3" />
    <path d="M128 12h6v6h-6zM140 10h5v6h-5z" fill="#bbb" />
  </g>
);

const NodeDetail = ({ x, y }) => (
  <g transform={`translate(${x} ${y})`}>
    <path d="M-16 -26V26M-8 -26V26M0 26V46H56M56 28V52" stroke="#41a848" strokeWidth="4" />
    <path d="M-20 10H50" stroke="#b03ab0" strokeWidth="5" />
    <path d="M0 -2h30v10H0z" fill="#4ac8e0" />
    <path d="M-6 0h8v26h-8zM8 10h10v16H8z" fill="#d83ac0" />
    <circle cx="44" cy="6" r="13" stroke="#f4f4f4" strokeWidth="4" />
    <path d="M-10 -14h8v6h-8zM14 -14h10v5H14zM34 -8l16 16M22 20h10v8H22zM-4 30h8v5h-8z" fill="#fff" stroke="#fff" strokeWidth="2" />
  </g>
);

const SmallDetail = ({ x, y, c }) => (
  <g transform={`translate(${x} ${y})`}>
    <path d="M-10 -12V12M10 -12V12M-14 0H20M-14 14H14" stroke="#4cae60" strokeWidth="3" />
    <path d="M-8 -6h14v12H-8z" fill={c} />
    <path d="M-22 -6l6 6-6 8zM18 -4h6v8h-6zM-4 -12h5v4h-5z" fill="#fff" />
  </g>
);

const DetailSheet = () => (
  <g transform="translate(340 170) scale(.3333)" fill="none">
    <path d="M640 66h90M640 132h90M650 72v66M660 60v80M720 66v70" stroke="#7cc060" strokeWidth="3" />
    <path d="M652 104h86M690 132h40" stroke="#d8342e" strokeWidth="5" />
    <path d="M664 28h7v114h-7zM656 92h24v40h-24zM628 64h16v14h-16zM628 128h16v12h-16z" fill="#b9de3c" />
    <path d="M712 70h14v60h-14zM700 90h10v20h-10zM706 130h18v8h-18z" fill="#d83ac8" />
    <path d="M730 72h8v20h-8zM700 118h8v14h-8z" fill="#eaa23a" />
    <path d="M618 88l6 4v34l-6-4zM712 62h6v8h-6zM682 66h5v60h-5zM704 108h6v8h-6zM716 166h5v24h-5zM722 196h6v8h-6z" fill="#fff" />
    <NodeDetail x={790} y={74} />
    <NodeDetail x={790} y={182} />
    <NodeDetail x={684} y={206} />
    <path d="M636 212l8-4v22zM752 86l6-8v20zM752 196l6-8v20z" fill="#fff" />
    <SmallDetail x={888} y={76} c="#4cae60" />
    <SmallDetail x={888} y={124} c="#a83a3a" />
    <SmallDetail x={888} y={178} c="#4cae60" />
    <SmallDetail x={812} y={266} c="#c8742e" />
    <path d="M888 216v56M880 218h26M868 240h60M872 252h48M896 216v30M880 270h30" stroke="#4ccac8" strokeWidth="4" />
    <path d="M856 226h3v48h-3zM920 238l8 8-8 8z" fill="#fff" />
    <path d="M918 242l22 22" stroke="#fff" strokeWidth="3" />
  </g>
);

const Details = () => (
  <g transform="translate(670 170) scale(.3333)" fill="none">
    <path d="M686 306l12 4-4 18zM748 294h4v56h-4zM794 314h6v8h-6zM864 308h6v26h-6zM904 306h5v30h-5z" fill="#fff" />
    {[712, 768, 884, 930].map((c) => (
      <g key={c}>
        <path d={`M${c - 8} 306v32M${c + 8} 304v40M${c - 10} 322h22M${c - 6} 340h16`} stroke="#52b860" strokeWidth="4" />
        <path d={`M${c - 6} 310h12v6h-12zM${c} 326h8v10h-8z`} stroke="#fff" strokeWidth="3" />
      </g>
    ))}
    <path d="M820 294v52M806 308h26v14h-26M808 344h22" stroke="#3a9fd0" strokeWidth="4" />
  </g>
);

const RED_BARS = [17, 18, 28, 12, 34, 33, 40, 6];

const Drawing = () => (
  <svg className="absolute inset-0 h-full w-full" aria-label="模型空间">
    <g transform="translate(0 -175)">
      <Sheet x={349} y={86} />
      <Sheet x={513} y={86} />
      <Sheet x={683} y={86} />
      <Sheet x={854} y={86} />
      <Sheet x={1061} y={86} />
      <Sheet x={589} y={371} />
      <Sheet x={866} y={372} />
      <StairSheet />
      <TextStripes x={367} y={206} color="#fff" bars={[22, 35, 28, 25, 19, 25, 32, 48, 12]} />
      <DetailSheet />
      <TextStripes x={533} y={232} color="#22d8dc" bars={[16, 26, 37, 5]} />
      <BeamPlan x={730} y={175} />
      <BeamPlan x={730} y={229} boxed />
      <Plan x={902} y={162} />
      <Plan x={902} y={217} boxed />
      <Details />
      <TextStripes x={595} y={399} color="#e01010" bars={RED_BARS} />
      <Plan x={637} y={390} />
      <Plan x={637} y={446} />
      <Plan x={637} y={501} boxed />
      <TextStripes x={871} y={400} color="#e01010" bars={RED_BARS} />
      <Plan x={913} y={391} />
      <Plan x={913} y={447} />
      <Plan x={913} y={502} boxed />
      {/* crosshair */}
      <path d="M421 343.500h25M453 343.500h24M449.500 316v24M449.500 347v25M446.500 340.500h6v6h-6zM449.500 342v3M448 343.500h3" stroke="#e8e8e8" fill="none" />
      {/* ucs axis */}
      <path d="M0 523.500h37M42 509l13 13M55 509l-13 13M0 458l2-2" stroke="#fff" fill="none" />
    </g>
  </svg>
);

const ViewCube = () => (
  <svg width="68" height="110" viewBox="0 0 68 110" className="absolute top-0 right-0" fontSize="10" textAnchor="middle" aria-label="ViewCube">
    <circle cx="34" cy="41" r="27" fill="none" stroke="#2b2b2d" strokeWidth="6" />
    <rect x="21" y="28" width="26" height="26" fill="#b5b5b8" stroke="#8a8a8c" />
    <text x="34" y="47" fontSize="16" fill="#4a5560">上</text>
    <text x="34" y="17" fill="#b5b5b8">北</text>
    <text x="6" y="45" fill="#b5b5b8">西</text>
    <text x="34" y="74" fill="#b5b5b8">南</text>
    <text x="62" y="45" fill="#8a8a8e">东</text>
    <rect x="9" y="87" width="64" height="15" rx="3" fill="#77777d" stroke="#929298" />
    <text x="25" y="98" fontSize="11" fill="#c8c8d0">WCS</text>
    <path d="M48 93h7l-3.500 4z" fill="#99a" />
  </svg>
);

const NavBar = () => (
  <div className="absolute top-[129px] right-0 flex w-[27px] flex-col items-start gap-3 overflow-hidden rounded-l-md bg-[#434343] pt-4 pb-5 pl-1">
    <button type="button" aria-label="全导航控制盘">
      <svg width="28" height="28" viewBox="0 0 28 28" fill="none" stroke="#303030" strokeWidth="1.200">
        <circle cx="13" cy="13" r="11" />
        <circle cx="13" cy="13" r="7" />
        <rect x="10" y="10" width="6" height="6" />
      </svg>
    </button>
    <button type="button" aria-label="平移">
      <svg width="28" height="28" viewBox="0 0 28 28" fill="none" stroke="#303030" strokeWidth="1.200">
        <path d="M6 24L2 16c0-3 3-2 5 1V7c0-3 3-3 3 0v7V4c0-3 4-3 4 0v10V5c0-3 4-3 4 0v10l1-7c1-2 3-1 3 1l-2 15z" />
      </svg>
    </button>
    <button type="button" aria-label="范围缩放" className="-mt-3">
      <svg width="28" height="28" viewBox="0 0 28 28" fill="none" stroke="#303030" strokeWidth="1.500">
        <path d="M1 3l16 16M17 3L1 19M1 8V3h5M12 3h5v5" />
        <circle cx="18" cy="18" r="5" />
      </svg>
    </button>
    <button type="button" aria-label="动态观察">
      <svg width="28" height="28" viewBox="0 0 28 28" fill="none" stroke="#303030" strokeWidth="1.200">
        <ellipse cx="13" cy="13" rx="12" ry="4" />
        <ellipse cx="13" cy="13" rx="3" ry="12" />
      </svg>
    </button>
    <button type="button" aria-label="ShowMotion">
      <svg width="28" height="28" viewBox="0 0 28 28" fill="none" stroke="#303030" strokeWidth="1.200">
        <path d="M1 2h7v6H1zM10 2h7v6h-7zM19 2h7v6h-7zM1 11h16v13H1z" />
        <path d="M6 14l6 4-6 3z" fill="#303030" />
      </svg>
    </button>
  </div>
);

const Canvas = () => (
  <main className="relative min-h-60 flex-1 overflow-hidden bg-black text-white">
    <Drawing />
    <p className="relative pt-0.5 pl-[3px] leading-4">
      <Latin>[</Latin>俯视<Latin>] [</Latin>二维线框<Latin>]</Latin>
    </p>
    <ViewCube />
    <NavBar />
  </main>
);

// ---------- layout tabs, command line ----------
const LayoutTabs = () => (
  <div className="flex h-4 items-stretch overflow-hidden bg-[#f0ebe0] text-black">
    <button type="button" aria-label="下一个布局" className="flex w-[18px] shrink-0 items-center justify-center border-x border-[#d0ccc0]">
      <Icon w={6} h={8}><path d="M0 0l6 4-6 4z" fill="#bbb6aa" stroke="none" /></Icon>
    </button>
    <button type="button" aria-label="最后一个布局" className="flex w-4 shrink-0 items-center justify-center border-r border-[#d0ccc0]">
      <Icon w={8} h={8}><path d="M0 0l6 4-6 4zM6.500 0h1.500v8h-1.500z" fill="#bbb6aa" stroke="none" /></Icon>
    </button>
    <div className="relative flex">
      <svg className="absolute inset-0 h-4 w-24" viewBox="0 0 96 16" aria-hidden="true">
        <path d="M0 0h45l-6 14H4z" fill="#000" />
        <path d="M45 9l-3 5M84 14l6-13" stroke="#555" fill="none" />
      </svg>
      <button type="button" className="relative pl-2 leading-[15px] text-white">模型</button>
      <button type="button" className="relative ml-4 leading-[15px]">布局1</button>
    </div>
    <div className="ml-auto flex w-[34%] bg-[#fbfaf5]">
      <span className="w-1 border-l border-[#ddd8c8]" />
      <button type="button" aria-label="向左滚动" className="flex w-4 items-center justify-center rounded-xs bg-[#c3d3fb]">
        <Icon w={6} h={8}><path d="M5 0L1 4l4 4" stroke="#2c4a9a" strokeWidth="2" /></Icon>
      </button>
      <button type="button" aria-label="滚动块" className="ml-px flex w-4 items-center justify-center rounded-xs border border-[#98b4ee] bg-[#c3d3fb]">
        <Icon w={10} h={8}><path d="M1.500 1v6M3.500 1v6M5.500 1v6M7.500 1v6" stroke="#8eaaf0" /></Icon>
      </button>
      <button type="button" aria-label="向右滚动" className="ml-auto flex w-2 items-center justify-center bg-[#c3d3fb]">
        <Icon w={6} h={8}><path d="M1 0l4 4-4 4" stroke="#2c4a9a" strokeWidth="2" /></Icon>
      </button>
    </div>
  </div>
);

const CommandLine = () => {
  const [command, setCommand] = useState('');
  return (
    <div className={`${MONO} overflow-hidden bg-white text-base text-black`}>
      <div className="h-[39px] leading-4 whitespace-pre">
        <p>
          <span className="text-[13px]">utodesk DWG</span>。 <span className="text-[13px]"> </span>此文件上次由
          <span className="text-[13px]"> Autodesk </span>应用程序或
          <span className="text-[13px]"> Autodesk </span>许可的应用程序保存，是可靠的
          <span className="text-[13px]"> DWG</span>。
        </p>
        <p className="-ml-2">命令:</p>
      </div>
      <div className="-ml-2 flex h-[19px] items-center border-t border-[#999]">
        <label htmlFor="command" className="pt-0.5">命令:</label>
        <input
          id="command"
          type="text"
          value={command}
          onChange={(e) => setCommand(e.target.value)}
          className="h-full min-w-0 flex-1 bg-transparent pl-1 outline-none"
        />
      </div>
    </div>
  );
};

// ---------- status bar ----------
const StatusButton = ({ label, on, className = 'w-[22px]', children }) => (
  <button
    type="button"
    aria-label={label}
    className={`flex h-[22px] shrink-0 items-center justify-center border-l border-[#666] ${
      on ? 'bg-linear-to-b from-[#a9cfe0] to-[#e2f4fb]' : 'bg-linear-to-b from-[#9a9a9b] to-[#bcbcbd]'
    } ${className}`}
  >
    {children}
  </button>
);

const TOGGLES = [
  ['推断约束', false, <path key="a" d="M1 6.500h11M6.500 1v11M4.500 4.500h4v4h-4zM12.500 15V9.500h4v3h-4" stroke="#222" />],
  ['捕捉模式', false, <path key="b" d="M2 4.500h10M2 7.500h10M2 10.500h10M2 13.500h10M14.500 3v10" stroke="#222" strokeDasharray="1 2" />],
  ['栅格显示', false, <path key="c" d="M1.500 1.500h15v13h-15zM4.500 1v14M7.500 1v14M10.500 1v14M13.500 1v14M1 4.500h15M1 7.500h15M1 10.500h15" stroke="#555" fill="#eee" />],
  ['正交模式', false, <path key="d" d="M1.500 1v13.500h15M2 9.500h5v5" stroke="#333" />],
  ['极轴追踪', true, <path key="e" d="M3 9a5 4 0 1 1 9 3 5 4 0 0 1-9-3zM5 9h11M8 10l6-8" stroke="#222" />],
  ['对象捕捉', true, <g key="f"><path d="M3.500 3.500h12v11h-12z" fill="#f4fafc" stroke="#444" /><circle cx="3" cy="3" r="2" fill="#fff" stroke="#c0602a" /></g>],
  ['三维对象捕捉', false, <g key="g"><path d="M4 4l3-2.500h9V10l-3 4H4z" fill="#f4f4f4" stroke="#444" /><circle cx="4" cy="14" r="2" fill="#fff" stroke="#c0602a" /></g>],
  ['对象捕捉追踪', true, <path key="h" d="M14 3L3 13h12" stroke="#222" />],
  ['动态UCS', true, <g key="i"><path d="M3.500 1v13.500h14M3 14L13 5M1.500 3l2-2 2 2M15 12.500l2 2-2 2" stroke="#333" /><path d="M11 7l4-5" stroke="#e3a93a" strokeWidth="3" /></g>],
  ['动态输入', true, <path key="j" d="M6.500 3v9M1 7.500h10M10.500 8.500h6v4h-6z" stroke="#222" />],
  ['线宽', false, <path key="k" d="M9 2v12M3 8h12" stroke="#111" strokeWidth="1.500" />],
  ['透明度', true, <g key="l"><rect x="1.500" y="1.500" width="15" height="13" fill="#8fb8e0" stroke="#2c6ca0" /><path d="M3 4h12M3 8h12M3 12h12" stroke="#e2f0fa" strokeWidth="2" strokeDasharray="2 2" /><path d="M5 6h10M5 10h10" stroke="#e2f0fa" strokeWidth="2" strokeDasharray="2 2" /></g>],
  ['快捷特性', false, <path key="m" d="M5.500 2.500h8v11h-8zM7 5.500h1M9 5.500h3M7 8h1M9 8h3M7 10.500h1M9 10.500h3" fill="#fff" stroke="#111" />],
  ['选择循环', false, <g key="n"><path d="M4.500 1v7M1 4.500h7" stroke="#222" /><path d="M6.500 5.500h7v6h-7z" fill="#eee" stroke="#555" /><path d="M9.500 8.500h7v6h-7z" fill="#6fae5e" stroke="#335c2a" /></g>],
];

const Scale = ({ color = '#f4f4f4' }) => (
  <path d="M7 1h3l1 6 6 7h-3l-5.500-5L3 14H0l6-7z" fill={color} stroke="#444" strokeWidth=".8" />
);

const StatusBar = () => (
  <div className="flex h-[26px] items-center overflow-hidden border-t border-b-2 border-[#444] bg-linear-to-b from-[#858486] to-[#a3a2a3] text-black">
    <div className={`-ml-1 w-52 shrink-0 text-[10px] whitespace-pre ${MONO}`}>6149.81,  -949040.67, 0.00</div>
    {TOGGLES.map(([label, on, shape]) => (
      <StatusButton key={label} label={label} on={on}>
        <Icon w={18} h={16}>{shape}</Icon>
      </StatusButton>
    ))}
    <span className="h-[22px] border-l border-[#666]" />
    <div className="ml-auto flex items-center">
      <StatusButton label="模型或图纸空间" className="w-[30px]">模型</StatusButton>
      <StatusButton label="快速查看布局">
        <Icon w={16} h={16}>
          <path d="M2.500 1.500h10v10h-10z" fill="#eee" stroke="#333" />
          <path d="M5 4v5h5z" fill="#555" stroke="none" />
          <path d="M0 14.500h16" stroke="#333" />
        </Icon>
      </StatusButton>
      <StatusButton label="快速查看图形">
        <Icon w={18} h={16}>
          <path d="M1.500 2.500h7v7h-7zM9.500 2.500h7v7h-7z" fill="#f4f4f4" stroke="#333" />
          <path d="M1 12.500h16" stroke="#333" strokeWidth="2" />
        </Icon>
      </StatusButton>
      <StatusButton label="注释比例" className="ml-5 w-[55px] gap-0.5">
        <Icon w={16} h={16}><Scale /></Icon>
        <span className={`${MONO} text-[10px]`}>1:1</span>
        <Caret w={8} color="#111" />
      </StatusButton>
      <StatusButton label="注释可见性">
        <Icon w={18} h={16}>
          <Scale />
          <circle cx="14" cy="9" r="3" fill="#f3cf5a" stroke="#a97f20" />
        </Icon>
      </StatusButton>
      <StatusButton label="自动添加比例">
        <Icon w={18} h={16}><Scale color="#c4c4c4" /></Icon>
      </StatusButton>
      <StatusButton label="切换工作空间" className="ml-1 w-[22px]">
        <GearShape stroke="#333" />
      </StatusButton>
      <StatusButton label="锁定界面">
        <Icon w={16} h={16}>
          <path d="M1.500 7.500h9v7h-9z" fill="#f4f4f4" stroke="#222" />
          <path d="M8.500 7V4c0-3 6-3 6 0v4" stroke="#222" />
          <path d="M6 10v3" />
        </Icon>
      </StatusButton>
      <StatusButton label="硬件加速">
        <Icon w={18} h={16}>
          <path d="M1.500 4.500h13v6h-13z" fill="#7785b0" stroke="#445" />
          <path d="M3 2v2M6 2v2M9 2v2M12 2v2M3 11v2M6 11v2M9 11v2" stroke="#445" />
          <circle cx="14" cy="11" r="3" fill="#cfe4f6" stroke="#58a" />
        </Icon>
      </StatusButton>
      <div className="ml-1 flex h-[19px] w-[46px] items-center justify-around border border-[#555] bg-[#a8a8a0]">
        <Icon w={16} h={15}>
          <path d="M2 4h8l4 4v6H2z" fill="#4c6c90" stroke="#234" />
          <path d="M2 9h8v5H2z" fill="#ead44a" stroke="#875" />
          <path d="M4 5h4" stroke="#fff" strokeWidth="2" />
          <path d="M8 11l2 3 6-7" stroke="#3c9a30" strokeWidth="2" />
        </Icon>
        <Icon w={12} h={16}>
          <path d="M1.500 6c0-6 9-6 9 0 0 3-2.500 3.500-2.500 6H4C4 9.500 1.500 9 1.500 6z" fill="#fbeb9c" stroke="#8a7a30" />
          <path d="M4.500 14h3" strokeWidth="2" />
        </Icon>
      </div>
      <button type="button" aria-label="状态栏菜单" className="flex h-[22px] w-5 items-center justify-center">
        <Caret w={5} color="#111" />
      </button>
      <StatusButton label="全屏显示" className="w-2 justify-start">
        <Icon w={8} h={14}>
          <path d="M8 1.500H1.500v10H8" fill="#eee" stroke="#333" />
        </Icon>
      </StatusButton>
    </div>
  </div>
);

// ---------- taskbar ----------
const Taskbar = () => (
  <footer className="overflow-hidden bg-[#2059dc] text-white">
    <div className="flex h-1">
      <span className="w-[122px] bg-[#123f8c]" />
      <span className="flex-1 bg-[#6b7fd6]" />
      <span className="w-[155px] bg-[#0e3f8e]" />
    </div>
    <div className="flex h-[29px] items-stretch bg-linear-to-b from-[#3f80ee] via-[#225bdc] to-[#1f55d4]">
      <button
        type="button"
        className="w-16 shrink-0 rounded-r-xl bg-linear-to-b from-[#4fae4c] via-[#338f34] to-[#2a7d2c] pl-1 text-left text-lg leading-7 italic text-[#eef5e8]"
      >
        开始
      </button>
      <button type="button" aria-label="Internet Explorer" className="ml-3 flex w-4 items-center">
        <Icon w={16} h={16}>
          <path d="M2.500 2.500h9l3 2v9h-10l-2-2z" fill="#d8ecf8" stroke="#8fc2ea" />
          <path d="M4.500 9h7c0-4-6-5-6.500-1-.5 5 5 5 6 2M5 12c3-6 6-8 9-8" stroke="#1d6fc0" strokeWidth="1.500" />
        </Icon>
      </button>
      <button
        type="button"
        className="ml-[55px] flex w-[157px] min-w-0 items-center gap-1 rounded-xs bg-linear-to-b from-[#5295f6] to-[#3a7bec] pl-2"
      >
        <Icon w={16} h={14}>
          <path d="M1.500 2.500h5l1 1.500h6v9h-12z" fill="#e8be4c" stroke="#b88a28" />
          <path d="M4.500 6.500h11l-3 6.500h-10z" fill="#fbe69a" stroke="#c79b38" />
          <path d="M8 4h6v3H8z" fill="#fff" stroke="none" />
        </Icon>
        <span className="whitespace-nowrap"><Latin>E:\</Latin>图纸</span>
      </button>
      <button
        type="button"
        className="ml-0.5 flex w-[160px] min-w-0 items-center gap-1 rounded-xs border-t border-l border-[#123c94] bg-[#1c4fb8] pl-2"
      >
        <Icon w={17} h={17}>
          <path d="M1.500 5.500h14v11h-14z" fill="#d0d4de" stroke="#889" />
          <path d="M1 12h15v4H1z" fill="#f0f0f4" stroke="none" />
          <path d="M3 12L8.500 1 13 12M5.500 8.500H12" stroke="#c0242c" strokeWidth="2" />
        </Icon>
        <Latin><span className="whitespace-nowrap">AutoCAD 2012 - [...</span></Latin>
      </button>
      <div className="ml-auto flex w-11 shrink-0 items-center bg-linear-to-b from-[#2fb0f6] to-[#1290e4]">
        <button type="button" aria-label="显示隐藏的图标" className="-ml-2 flex h-4 w-4 shrink-0 items-center justify-center rounded-full bg-[#1a7fe0] ring-1 ring-[#5cb4f4]">
          <Icon w={6} h={9}><path d="M5 1L1.500 4.500 5 8" stroke="#fff" strokeWidth="2" /></Icon>
        </button>
        <span className="ml-0.5 flex h-4 w-4 shrink-0 items-center justify-center rounded-xs bg-[#e59a3c] text-xs font-bold">
          通
        </span>
        <span className="ml-1.5 text-[11px] whitespace-nowrap">10</span>
      </div>
    </div>
  </footer>
);

const App = () => (
  <div className="flex min-h-screen flex-col overflow-hidden bg-[#6b6866] font-['Liberation_Sans','Noto_Sans_CJK_SC',sans-serif] text-xs">
    <TitleBar />
    <RibbonTabs />
    <Ribbon />
    <div className="h-[7px] border-b border-[#a9a7a4] bg-[#6b6866]" />
    <Canvas />
    <LayoutTabs />
    <div className="h-[5px] bg-[#6b6866]" />
    <CommandLine />
    <StatusBar />
    <Taskbar />
  </div>
);

export default App;
